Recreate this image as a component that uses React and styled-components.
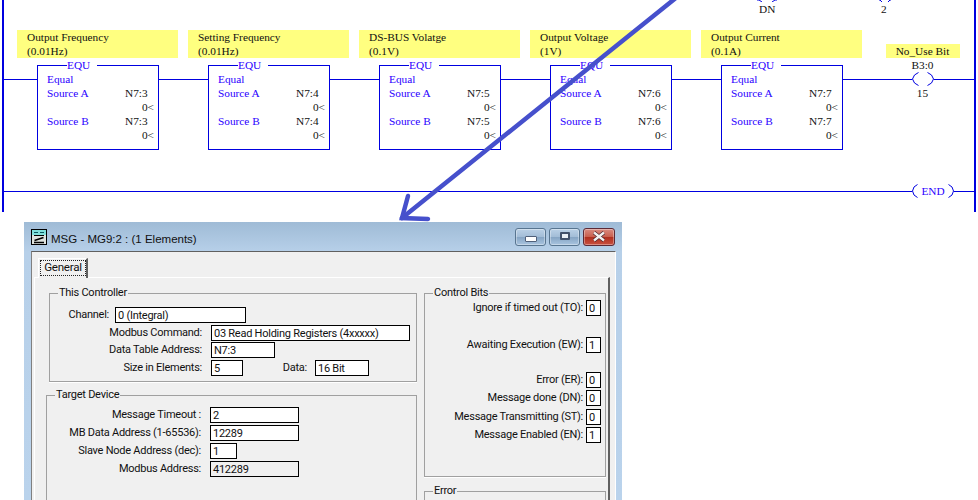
import React from "react";
import styled, { createGlobalStyle } from "styled-components";

const Global = createGlobalStyle`
  html, body { margin: 0; padding: 0; background: #fff; }
  body { width: 978px; height: 500px; overflow: hidden; }
`;

const Page = styled.div`
  position: relative;
  width: 978px;
  height: 500px;
  overflow: hidden;
  display: flex;
  flex-direction: column;
`;

/* ---------- ladder ---------- */
const Ladder = styled.section`
  box-sizing: border-box;
  margin-left: 2px;
  width: 974px;
  height: 212px;
  border-left: 2px solid #0000e0;
  border-right: 2px solid #0000e0;
  display: flex;
  flex-direction: column;
  font: 11.3px/14px "Liberation Serif", serif;
  color: #101010;
`;
const TopRefs = styled.div`
  height: 30px;
  display: flex;
  padding-left: 755px;
  padding-top: 2px;
  box-sizing: border-box;
`;
const TopRef = styled.span`
  position: relative;
  width: ${(p) => p.$w}px;
  height: 14px;
`;
const TopMark = styled.svg`
  position: absolute;
  left: ${(p) => p.$x}px;
  top: -2px;
  width: ${(p) => p.$w}px;
  height: 2px;
`;
const Rung = styled.div`
  display: flex;
  align-items: flex-start;
  height: 132px;
`;
const Instruction = styled.div`
  width: 171px;
  flex: none;
  display: flex;
  flex-direction: column;
  align-items: flex-start;
  padding-left: 13px;
  box-sizing: border-box;
`;
const Note = styled.div`
  width: 161px;
  height: 28px;
  box-sizing: border-box;
  padding-left: 10px;
  background: #ffff80;
  white-space: pre-line;
`;
const Wire = styled.div`
  position: relative;
  margin-top: 7px;
  margin-left: -13px;
  width: 171px;
  height: 84px;
  display: flex;

  &::before {
    content: "";
    position: absolute;
    left: 0;
    right: 0;
    top: 14px;
    border-top: 1px solid #0000e0;
  }
`;
const Box = styled.div`
  position: relative;
  margin-left: 33px;
  width: 122px;
  height: 85px;
  box-sizing: border-box;
  border: 1px solid #0000e0;
  background: #fff;
  padding: 6px 4px 0 9px;
  display: grid;
  grid-template-columns: 78px 1fr;
  grid-auto-rows: 14px;
  color: #2a00ff;
`;
const BoxTitle = styled.span`
  position: absolute;
  top: -8px;
  left: 29px;
  width: 30px;
  box-sizing: border-box;
  background: #fff;
  text-align: left;
  line-height: 14px;
`;
const BoxLabel = styled.span`
  grid-column: 1;
`;
const BoxRef = styled.span`
  color: #101010;
  grid-column: 2;
`;
const BoxVal = styled.span`
  grid-column: 1 / 3;
  color: #101010;
  text-align: right;
`;
const CoilCol = styled.div`
  flex: 1;
  position: relative;
  display: flex;
  flex-direction: column;
  align-items: center;
  padding-top: 14px;
`;
const CoilNote = styled.div`
  width: 74px;
  height: 14px;
  background: #ffff80;
  text-align: center;
  margin-left: 12px;
`;
const CoilAddr = styled.div`
  height: 14px;
  margin-left: 12px;
  line-height: 15px;
`;
const CoilWire = styled.div`
  position: relative;
  width: 100%;
  height: 14px;
  display: flex;
  justify-content: center;

  &::before {
    content: "";
    position: absolute;
    left: 0;
    right: 0;
    top: 7px;
    border-top: 1px solid #0000e0;
  }
`;
const Coil = styled.svg`
  position: relative;
  width: 22px;
  height: 14px;
  margin-left: 12px;
  background: #fff;
`;
const CoilBit = styled.span`
  margin-left: 12px;
`;
const EndRung = styled.div`
  height: 34px;
  margin-top: 15px;
  position: relative;
  display: flex;
  justify-content: flex-end;
  padding-right: 20px;
  color: #2a00ff;

  &::before {
    content: "";
    position: absolute;
    left: 0;
    right: 0;
    top: 14px;
    border-top: 1px solid #0000e0;
  }
`;
const EndTag = styled.div`
  position: relative;
  top: 7px;
  width: 42px;
  height: 14px;
  background: #fff;
  display: flex;
  align-items: center;
  justify-content: center;
  line-height: 12px;
`;
const EndShape = styled.svg`
  position: absolute;
  left: 0;
  top: 0;
  width: 42px;
  height: 14px;
`;
const Arrow = styled.svg`
  position: absolute;
  left: 0;
  top: 0;
  width: 978px;
  height: 240px;
  pointer-events: none;
`;

/* ---------- dialog ---------- */
const Win = styled.section`
  box-sizing: border-box;
  margin: 10px 0 0 24px;
  width: 598px;
  height: 278px;
  flex: none;
  background: linear-gradient(#9fbbd6 0, #b7d0e9 30px, #bad3ec 100%);
  padding: 0 6px 0 7px;
  display: flex;
  flex-direction: column;
  font: 11px/14px Roboto, "Liberation Sans", sans-serif;
  letter-spacing: -0.25px;
  color: #111;
`;
const TitleBar = styled.header`
  height: 29px;
  flex: none;
  display: flex;
  align-items: center;
  gap: 4px;
  padding-top: 1px;
  box-sizing: border-box;
`;
const TitleText = styled.span`
  flex: 1;
  font: 11.5px/14px "Liberation Sans", sans-serif;
  letter-spacing: 0;
  padding-top: 3px;
`;
const WinButtons = styled.div`
  display: flex;
  gap: 3px;
  margin-right: 1px;
  margin-top: -1px;
`;
const WinButton = styled.div`
  width: ${(p) => (p.$close ? 32 : 31)}px;
  height: 18px;
  box-sizing: border-box;
  border: 1px solid ${(p) => (p.$close ? "#5c2a36" : "#587590")};
  border-radius: 3px;
  box-shadow: inset 0 0 0 1px rgba(255, 255, 255, 0.35);
  background: ${(p) =>
    p.$close
      ? "linear-gradient(#d98b80 0, #c9604f 48%, #b0301f 52%, #c95040 100%)"
      : "linear-gradient(#bad0e6 0, #a3bdd7 48%, #86a5c4 52%, #a9c4df 100%)"};
  display: flex;
  align-items: center;
  justify-content: center;
`;
const MinGlyph = styled.span`
  width: 10px;
  height: 4px;
  margin-top: 5px;
  background: #fff;
  border: 1px solid #50607a;
  border-radius: 1px;
`;
const MaxGlyph = styled.span`
  width: 10px;
  height: 8px;
  margin-top: -1px;
  box-sizing: border-box;
  background: #e8eef5;
  border: 2px solid #40506a;
  border-radius: 1px;
`;
const Client = styled.div`
  flex: 1;
  box-sizing: border-box;
  border-top: 1px solid #606060;
  border-left: 1px solid #808080;
  border-right: 1px solid #fff;
  background: #f0f0f0;
  padding: 6px 0 0 2px;
  display: flex;
  flex-direction: column;
  position: relative;
`;
const Tab = styled.div`
  align-self: flex-start;
  margin-left: 4px;
  width: 50px;
  height: 20px;
  box-sizing: border-box;
  padding: 1px 0 0 1px;
  border: 1px solid #fff;
  border-bottom: 0;
  border-right: 2px solid #606060;
  background: #f0f0f0;
  position: relative;
  z-index: 1;
  margin-bottom: -1px;
`;
const TabFocus = styled.span`
  display: block;
  height: 16px;
  text-align: center;
  border: 1px dotted #222;
  box-sizing: border-box;
  line-height: 13px;
  font-size: 11.6px;
`;
const TabPage = styled.div`
  flex: 1;
  width: 576px;
  box-sizing: border-box;
  border-top: 1px solid #fff;
  border-left: 1px solid #fff;
  border-right: 2px solid #606060;
  display: grid;
  grid-template-columns: 371px 182px;
  column-gap: 7px;
  align-content: start;
  padding: 9px 0 0 11px;
`;
const Column = styled.div`
  display: flex;
  flex-direction: column;
`;
const Group = styled.fieldset`
  box-sizing: border-box;
  margin: ${(p) => p.$mt || 0}px 0 0 ${(p) => p.$ml || 0}px;
  padding: 0;
  height: ${(p) => p.$h}px;
  min-width: 0;
  border: 1px solid #a0a0a0;
  box-shadow: 0 1px 0 #fff;
  position: relative;
`;
const Legend = styled.legend`
  margin-left: 8px;
  padding: 0 1px;
  line-height: 12px;
  height: 12px;
`;
const FieldRow = styled.div`
  display: flex;
  align-items: center;
  height: ${(p) => p.$h || 16}px;
  margin-top: ${(p) => p.$mt || 0}px;
`;
const FieldLabel = styled.span`
  width: ${(p) => p.$w}px;
  flex: none;
  text-align: right;
  white-space: nowrap;
  padding-right: ${(p) => p.$pr ?? 9}px;
  box-sizing: border-box;
`;
const Input = styled.div`
  box-sizing: border-box;
  width: ${(p) => p.$w}px;
  height: ${(p) => p.$h || 16}px;
  flex: none;
  border: 1px solid #000;
  background: ${(p) => (p.$ro ? "#f0f0f0" : "#fff")};
  padding-left: 2px;
  line-height: 16px;
  white-space: nowrap;
  overflow: hidden;
`;
const BitRow = styled.div`
  display: flex;
  justify-content: flex-end;
  align-items: center;
  gap: 3px;
  height: 16px;
  margin-top: ${(p) => p.$mt || 0}px;
  padding-right: 4px;
  white-space: nowrap;
`;

const rungs = [
  ["Output Frequency\n(0.01Hz)", "N7:3"],
  ["Setting Frequency\n(0.01Hz)", "N7:4"],
  ["DS-BUS Volatge\n(0.1V)", "N7:5"],
  ["Output Voltage\n(1V)", "N7:6"],
  ["Output Current\n(0.1A)", "N7:7"],
];
const bits = [
  ["Ignore if timed out (TO):", "0", 1],
  ["Awaiting Execution (EW):", "1", 21],
  ["Error (ER):", "0", 19],
  ["Message done (DN):", "0", 2],
  ["Message Transmitting (ST):", "0", 3],
  ["Message Enabled (EN):", "1", 2],
];

export default function App() {
  return (
    <Page>
      <Global />
      <Ladder>
        <TopRefs>
          <TopRef $w={122}>
            DN
            <TopMark $x={-2} $w={5} viewBox="0 0 5 2" fill="none" stroke="#0000e0"><path d="M0 0h2l3 2" /></TopMark>
            <TopMark $x={13} $w={5} viewBox="0 0 5 2" fill="none" stroke="#0000e0"><path d="M0 2l3-2h2" /></TopMark>
          </TopRef>
          <TopRef $w={20}>
            2
            <TopMark $x={-2} $w={4} viewBox="0 0 4 2" fill="none" stroke="#0000e0"><path d="M0 0h1l2 2" /></TopMark>
            <TopMark $x={6} $w={4} viewBox="0 0 4 2" fill="none" stroke="#0000e0"><path d="M1 2l2-2h1" /></TopMark>
          </TopRef>
        </TopRefs>
        <Rung>
          {rungs.map(([note, ref]) => (
            <Instruction key={ref}>
              <Note>{note}</Note>
              <Wire>
                <Box>
                  <BoxTitle>EQU</BoxTitle>
                  <BoxLabel>Equal</BoxLabel>
                  <span />
                  <BoxLabel>Source A</BoxLabel>
                  <BoxRef>{ref}</BoxRef>
                  <BoxVal>0&lt;</BoxVal>
                  <BoxLabel>Source B</BoxLabel>
                  <BoxRef>{ref}</BoxRef>
                  <BoxVal>0&lt;</BoxVal>
                </Box>
              </Wire>
            </Instruction>
          ))}
          <CoilCol>
            <CoilNote>No_Use Bit</CoilNote>
            <CoilAddr>B3:0</CoilAddr>
            <CoilWire>
              <Coil viewBox="0 0 22 14" fill="none" stroke="#0000e0">
                <path d="M6.5 .5 L2.5 3 L.5 7 L2.5 11 L6.5 13.5 M15.5 .5 L19.5 3 L21.5 7 L19.5 11 L15.5 13.5" />
              </Coil>
            </CoilWire>
            <CoilBit>15</CoilBit>
          </CoilCol>
        </Rung>
        <EndRung>
          <EndTag>
            <EndShape viewBox="0 0 42 14" fill="none" stroke="#0000e0">
              <path d="M5.5 .5 L2 3 L.5 7 L2 11 L5.5 13.5 M36.5 .5 L40 3 L41.5 7 L40 11 L36.5 13.5" />
            </EndShape>
            END
          </EndTag>
        </EndRung>
      </Ladder>

      <Win>
        <TitleBar>
          <svg width="16" height="16" viewBox="0 0 16 16">
            <rect x=".5" y=".5" width="15" height="15" fill="#dfe3df" stroke="#000" />
            <path d="M1 1h14v5H1z" fill="#7fe0dc" />
            <path d="M3 3.5h4M9 3.5h4" stroke="#0a5a60" />
            <path d="M3 6.5h10" stroke="#000" />
            <path d="M12.5 8.5 L3.5 11.5 M3 13.5h10" stroke="#000" strokeWidth="1.6" fill="none" />
          </svg>
          <TitleText>MSG - MG9:2 : (1 Elements)</TitleText>
          <WinButtons>
            <WinButton><MinGlyph /></WinButton>
            <WinButton><MaxGlyph /></WinButton>
            <WinButton $close>
              <svg width="16" height="11" viewBox="0 0 16 11">
                <path d="M3 1.5 L13 9.5 M13 1.5 L3 9.5" stroke="#40202a" strokeWidth="3.6" />
                <path d="M3 1.5 L13 9.5 M13 1.5 L3 9.5" stroke="#f4f0ee" strokeWidth="2.4" />
              </svg>
            </WinButton>
          </WinButtons>
        </TitleBar>
        <Client>
          <Tab><TabFocus>General</TabFocus></Tab>
          <TabPage>
            <Column>
              <Group $h={95} $ml={3}>
                <Legend>This Controller</Legend>
                <FieldRow $mt={8}>
                  <FieldLabel $w={65} $pr={6}>Channel:</FieldLabel>
                  <Input $w={131}>0 (Integral)</Input>
                </FieldRow>
                <FieldRow $mt={2}>
                  <FieldLabel $w={161}>Modbus Command:</FieldLabel>
                  <Input $w={199}>03 Read Holding Registers (4xxxxx)</Input>
                </FieldRow>
                <FieldRow $mt={1}>
                  <FieldLabel $w={161}>Data Table Address:</FieldLabel>
                  <Input $w={64}>N7:3</Input>
                </FieldRow>
                <FieldRow $mt={2}>
                  <FieldLabel $w={161}>Size in Elements:</FieldLabel>
                  <Input $w={32}>5</Input>
                  <FieldLabel $w={72} $pr={8}>Data:</FieldLabel>
                  <Input $w={54}>16 Bit</Input>
                </FieldRow>
              </Group>
              <Group $h={130} $mt={7}>
                <Legend>Target Device</Legend>
                <FieldRow $mt={6}>
                  <FieldLabel $w={163}>Message Timeout :</FieldLabel>
                  <Input $w={89}>2</Input>
                </FieldRow>
                <FieldRow $mt={2}>
                  <FieldLabel $w={163}>MB Data Address (1-65536):</FieldLabel>
                  <Input $w={89}>12289</Input>
                </FieldRow>
                <FieldRow $mt={2}>
                  <FieldLabel $w={163}>Slave Node Address (dec):</FieldLabel>
                  <Input $w={27}>1</Input>
                </FieldRow>
                <FieldRow $mt={2}>
                  <FieldLabel $w={163}>Modbus Address:</FieldLabel>
                  <Input $w={89} $ro>412289</Input>
                </FieldRow>
              </Group>
            </Column>
            <Column>
              <Group $h={190}>
                <Legend>Control Bits</Legend>
                {bits.map(([label, val, mt]) => (
                  <BitRow key={label} $mt={mt}>
                    <span>{label}</span>
                    <Input $w={15}>{val}</Input>
                  </BitRow>
                ))}
              </Group>
              <Group $h={60} $mt={8}>
                <Legend>Error</Legend>
              </Group>
            </Column>
          </TabPage>
        </Client>
      </Win>

      <Arrow viewBox="0 0 978 240" fill="none" stroke="#4650cc" strokeWidth="4.5" strokeLinecap="round">
        <path d="M682 -7 L402 218" />
        <path d="M408 196 L402 218 L428 219" />
      </Arrow>
    </Page>
  );
}
